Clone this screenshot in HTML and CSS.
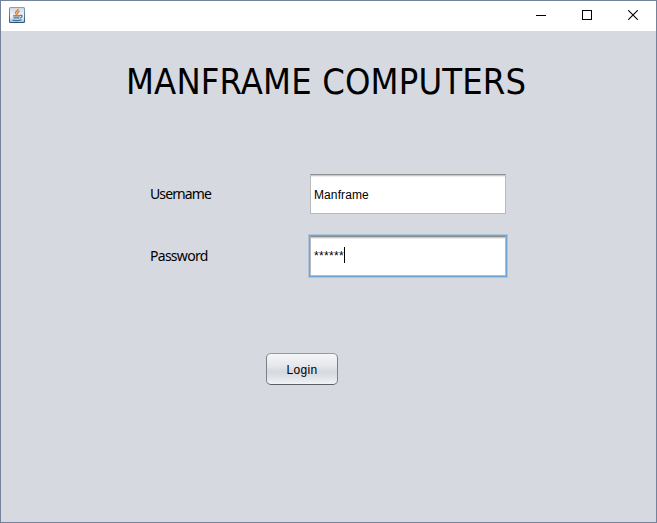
FILE: index.html
```html
<!DOCTYPE html>
<html lang="en">
<head>
<meta charset="utf-8">
<title>Manframe Computers</title>
<link rel="stylesheet" href="styles.css">
</head>
<body>
<div class="window">
  <header class="titlebar">
    <svg class="app-icon" width="16" height="16" viewBox="0 0 16 16">
      <defs><linearGradient id="tile" x1="0" y1="0" x2="0" y2="1"><stop offset="0" stop-color="#8ba3b6"/><stop offset="1" stop-color="#265577"/></linearGradient>
      <linearGradient id="face" x1="0" y1="0" x2="0" y2="1"><stop offset="0" stop-color="#cfdbe4"/><stop offset=".55" stop-color="#f3f5f7"/><stop offset="1" stop-color="#b5c8d6"/></linearGradient></defs>
      <rect width="16" height="16" rx="1.5" fill="url(#tile)"/>
      <rect x="1" y="1" width="14" height="14" rx=".8" fill="url(#face)"/>
      <path d="M9 1.8c.7 2-2.8 2.4-2.6 4.1.2.8 1 1.2 1.2 2M10.6 4.2C8.4 5 8.4 6.2 9 7.4" fill="none" stroke="#e77b22" stroke-width="1.4"/>
      <path d="M4 8.8h7M4.6 10.9h5.8M3.4 13.2q4.6.9 9-.3M11 8.4c2.9-.8 2.7 1.7.2 2.4" fill="none" stroke="#4a7392" stroke-width="1.2"/>
    </svg>
    <div class="controls">
      <svg width="10" height="10" viewBox="0 0 10 10" shape-rendering="crispEdges"><path d="M0 5.5h10" stroke="#000"/></svg>
      <svg width="10" height="10" viewBox="0 0 10 10" shape-rendering="crispEdges"><path d="M.5 .5h9v9h-9z" fill="none" stroke="#000"/></svg>
      <svg width="10" height="10" viewBox="0 0 10 10"><path d="M.2 .2l9.6 9.6M9.8 .2L.2 9.8" stroke="#000" stroke-width="1.1"/></svg>
    </div>
  </header>
  <main class="content">
    <h1 class="heading">MANFRAME COMPUTERS</h1>
    <form class="form">
      <span class="label label-user">Username</span>
      <div class="field"><span class="value">Manframe</span></div>
      <span class="label label-pass">Password</span>
      <div class="field focused"><span class="stars">******</span><span class="caret"></span></div>
    </form>
    <button class="login" type="button"><span class="login-text">Login</span></button>
  </main>
</div>
</body>
</html>
```
FILE: styles.css
```css
* { box-sizing: border-box; }
body { margin: 0; color: #000; }
.window { width: 657px; height: 523px; border: 1px solid #74839a; background: #d6d9df; overflow: hidden; }
.titlebar { height: 30px; background: #fff; display: flex; justify-content: space-between; padding: 6px 18px 0 8px; }
.app-icon { display: block; }
.controls { display: flex; gap: 36px; padding-top: 3px; }
.controls svg { display: block; }
.content { padding-top: 27px; }
.heading { margin: 0 0 0 125px; height: 48px; font: 400 36px/48px "DejaVu Sans Condensed", "DejaVu Sans", sans-serif; font-stretch: condensed; letter-spacing: 0.15px; white-space: nowrap; }
.form { display: grid; grid-template-columns: 160px 196px; grid-template-rows: 40px 40px; row-gap: 22px; margin: 68px 0 0 149px; align-items: center; }
.label { font: 14px/20px "Noto Sans", sans-serif; }
.label-user { letter-spacing: -0.88px; }
.label-pass { letter-spacing: -0.72px; }
.field { height: 40px; background: #fff; border: 1px solid #b8babd; border-top-color: #8d8e90; box-shadow: inset 0 1px #c6c8cb, inset 0 2px #ededee; display: flex; align-items: center; padding-left: 3px; font: 12px/16px "Liberation Sans", sans-serif; }
.value { letter-spacing: 0.1px; padding-top: 2px; }
.focused { padding-bottom: 2px; box-shadow: inset 0 1px #c6c8cb, inset 0 2px #ededee, 0 0 0 1px #73a4d1, 0 0 0 2px #adc4de; }
.stars { letter-spacing: 0.33px; padding-top: 2px; }
.caret { width: 1px; height: 16px; background: #000; }
.login { display: block; width: 72px; height: 32px; margin: 77px 0 0 265px; padding: 0; border: 1px solid; border-color: #96999e #7d8085 #5c5f65; border-radius: 5px; background: linear-gradient(#f5f6f8, #e5e7eb 40%, #d5d8de 60%, #e1e4e9 80%, #f2f4f7); color: #000; font: 12px/16px "Liberation Sans", sans-serif; }
.login-text { position: relative; top: 1px; letter-spacing: 0.3px; }
```
